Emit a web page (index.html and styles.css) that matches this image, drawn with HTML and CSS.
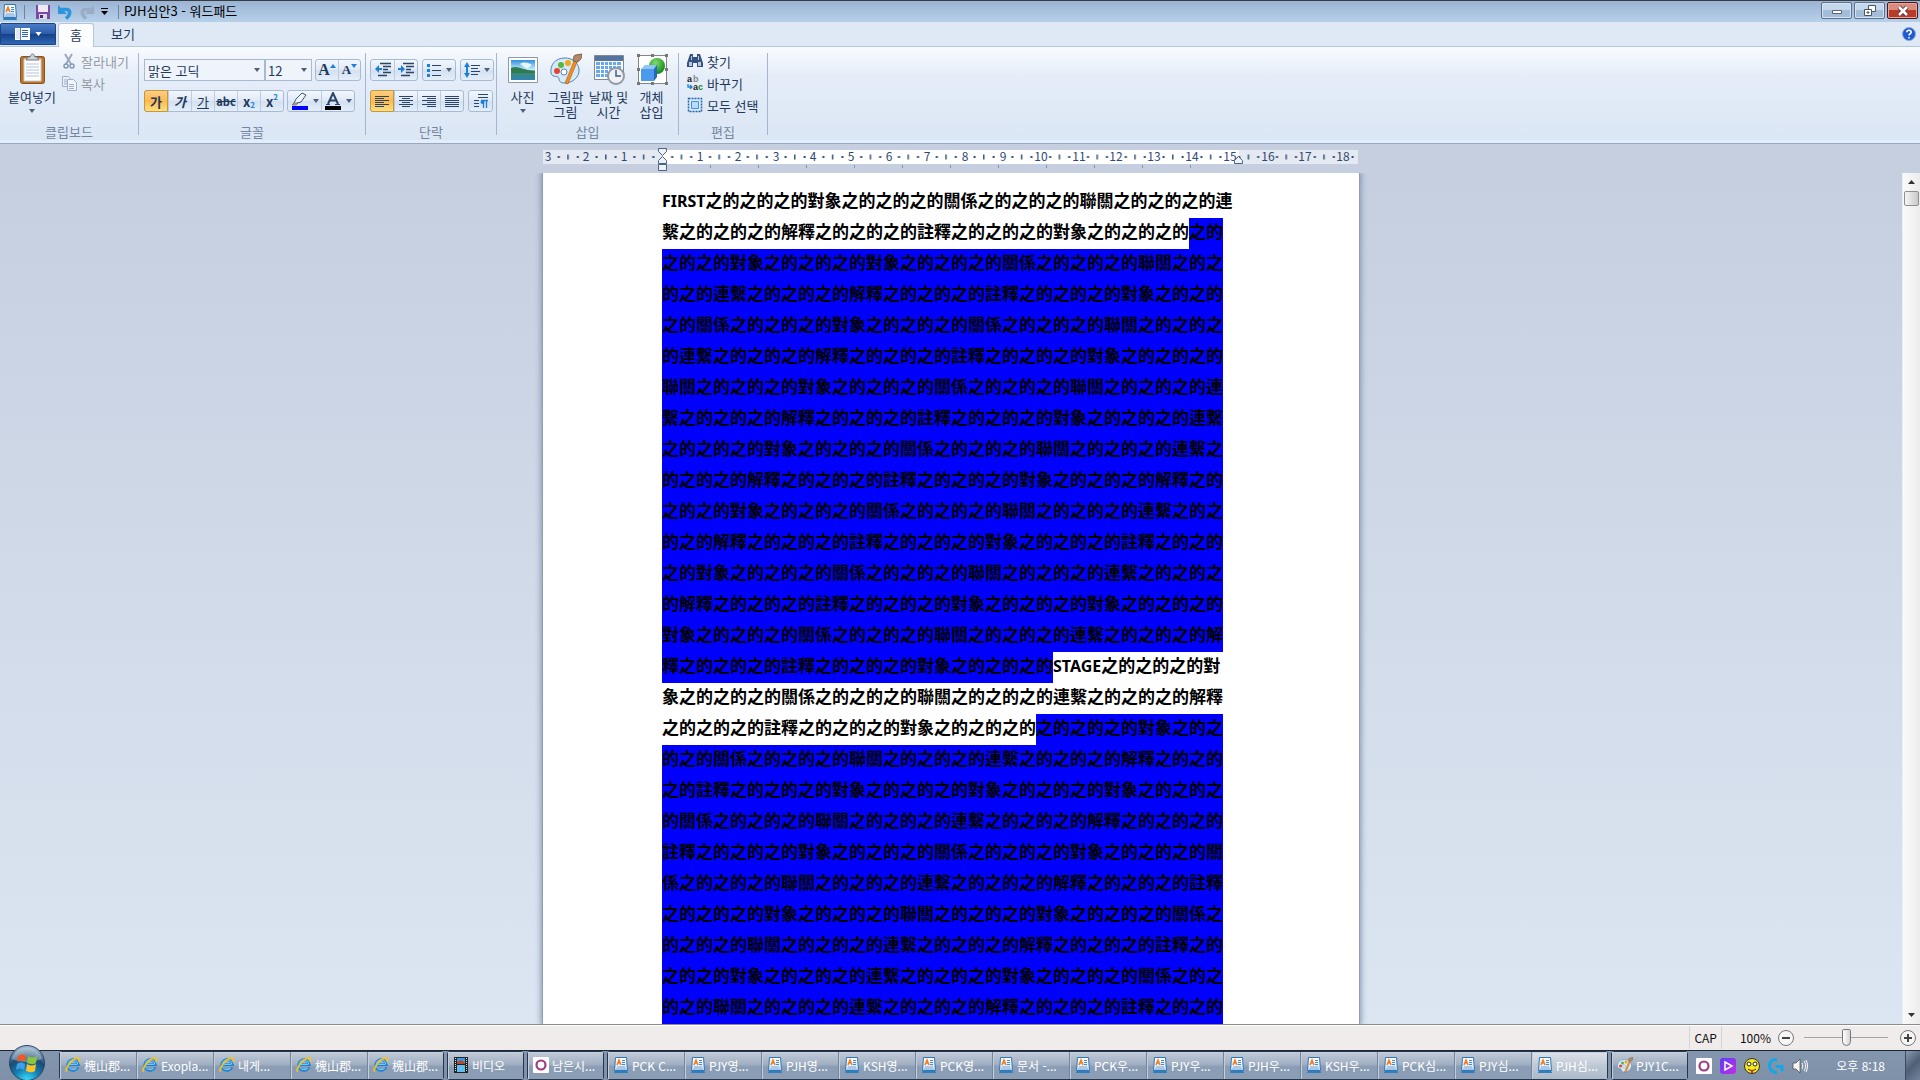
FILE: index.html
```html
<!DOCTYPE html>
<html lang="ko">
<head>
<meta charset="utf-8">
<title>PJH심안3 - 워드패드</title>
<link rel="stylesheet" href="styles.css">
</head>
<body>
<svg class="defs" aria-hidden="true">
  <defs>
    <linearGradient id="gPaper" x1="0" y1="0" x2="0" y2="1"><stop offset="0" stop-color="#fff"/><stop offset="1" stop-color="#cfe2f7"/></linearGradient>
    <radialGradient id="gGreen" cx=".4" cy=".3" r=".7"><stop offset="0" stop-color="#7fdc6c"/><stop offset="1" stop-color="#138a1c"/></radialGradient>
    <linearGradient id="gSky" x1="0" y1="0" x2="0" y2="1"><stop offset="0" stop-color="#2f8fe0"/><stop offset=".5" stop-color="#c9efff"/><stop offset=".55" stop-color="#3f8a63"/><stop offset="1" stop-color="#2c84b5"/></linearGradient>
    <radialGradient id="gOrb" cx=".5" cy="1" r="1"><stop offset="0" stop-color="#3fe0ff"/><stop offset=".35" stop-color="#1681b5"/><stop offset=".65" stop-color="#1c4a74"/><stop offset="1" stop-color="#a9c3d8"/></radialGradient>
    <linearGradient id="gPlay" x1="0" y1="0" x2="1" y2="1"><stop offset="0" stop-color="#5b3df5"/><stop offset="1" stop-color="#c52be8"/></linearGradient>
    <symbol id="wordpad" viewBox="0 0 16 16"><path d="M2 13h12l1 3H1z" fill="#2d7fc0"/><path d="M2.500 .5h11l1 13h-13z" fill="url(#gPaper)" stroke="#2f78b5"/><path d="M4 8l2-5 2 5M5 6h2" stroke="#f08020" stroke-width="1.500" fill="none"/><path d="M9 3.500h3M9 5.500h3M9 7.500h3" stroke="#4a88d0"/><path d="M4 10h8M3 12h10" stroke="#7aa6d4"/></symbol>
    <symbol id="ie" viewBox="0 0 18 18"><path d="M14.500 11.500a6 6 0 1 1 .5-3H5" fill="none" stroke="#1c7fd0" stroke-width="3.200"/><path d="M14 8.300H5.500M13.500 12a5.500 5.500 0 1 1 1-4" fill="none" stroke="#6cc6f8" stroke-width="1.300"/><path d="M2 16.500C-1 14 7 3 13 1.300c4-1 4 2 2.500 4" fill="none" stroke="#f6c21c" stroke-width="1.900"/></symbol>
    <symbol id="opera" viewBox="0 0 16 16"><rect width="16" height="16" rx="1" fill="#fff"/><circle cx="8" cy="8" r="4.500" fill="none" stroke="#a03a80" stroke-width="2.200"/></symbol>
    <symbol id="palette" viewBox="0 0 32 32"><path d="M15 5C5 5 0 12 1 20c1 4 5 3 7 4 2 2 0 5 5 6 9 1 17-6 16-14C28 9 22 5 15 5z" fill="#d4e9fa" stroke="#5584ad"/><circle cx="7" cy="18" r="3" fill="#e34530"/><circle cx="11" cy="12" r="3" fill="#58b540"/><circle cx="18" cy="10" r="3" fill="#f0a818"/><circle cx="14" cy="19" r="3" fill="#fff" stroke="#5584ad"/><path d="M24 8l3 1-9 22-3-1z" fill="#f18e22" stroke="#b35a12" stroke-width=".6"/><path d="M23 8c1-3 0-6 3-6l6-1c0 4-2 7-5 8z" fill="#b28a68" stroke="#806048"/></symbol>
    <symbol id="drop" viewBox="0 0 6 4"><path d="M0 0h6L3 4z" fill="currentColor"/></symbol>
  </defs>
</svg>

<header class="titlebar">
  <svg class="i16"><use href="#wordpad"/></svg>
  <span class="bar-sep"></span>
  <button class="plain" aria-label="저장"><svg class="i16" viewBox="0 0 16 16"><path d="M1 1h14v14H1z" fill="#7d4aa5"/><path d="M3 1h10v7H3z" fill="#efe9f6"/><path d="M4 10h8v5H4z" fill="#ddd"/><path d="M5 11h3v3H5z" fill="#4b2773"/></svg></button>
  <button class="plain" aria-label="실행 취소"><svg class="i16" viewBox="0 0 16 16"><path d="M4 5.500h5c5 0 5 5 0 9" fill="none" stroke="#2d94de" stroke-width="3.500"/><path d="M1 1v9h9z" fill="#2d94de"/></svg></button>
  <button class="plain" aria-label="다시 실행"><svg class="i16" viewBox="0 0 16 16"><path d="M12 5.500H7c-5 0-5 5 0 9" fill="none" stroke="#98acc6" stroke-width="3.500"/><path d="M15 1v9H6z" fill="#98acc6"/></svg></button>
  <button class="plain" aria-label="도구 모음 사용자 지정"><svg class="qat" viewBox="0 0 7 7"><path d="M0 0h7v1H0zM0 3h7L3.500 7z"/></svg></button>
  <span class="bar-sep"></span>
  <h1 class="title">PJH심안3 - 워드패드</h1>
  <div class="win-buttons">
    <button class="win" aria-label="최소화"><svg viewBox="0 0 12 12"><path d="M1.500 5.500h9v3h-9z" fill="#fff" stroke="#5b6470"/></svg></button>
    <button class="win" aria-label="이전 크기로 복원"><svg viewBox="0 0 12 12"><path d="M4.500 .5h7v6h-7z" fill="#fff" stroke="#4b5562"/><path d="M.5 4.500h7v6h-7z" fill="#fff" stroke="#4b5562"/><path d="M3 7h2v1H3z" fill="#b8cde4" stroke="#4b5562"/></svg></button>
    <button class="win close" aria-label="닫기"><svg viewBox="0 0 12 12"><path d="M2 2l8 8M10 2l-8 8" stroke="#5a3038" stroke-width="4.400"/><path d="M2 2l8 8M10 2l-8 8" stroke="#fff" stroke-width="2.600"/></svg></button>
  </div>
</header>

<nav class="tabs" role="tablist">
  <button class="app-menu" aria-label="워드패드 메뉴"><svg class="app-icon" viewBox="0 0 15 12"><path d="M0 0h15v12H0z" fill="#fff"/><path d="M1 1h4v10H1z" fill="#dfe7f2"/><path d="M5.500 0v12" stroke="#5d80b5"/><path d="M7 2.500h6M7 4.500h6M7 6.500h6M7 8.500h6" stroke="#2f62ad"/></svg><svg class="drop"><use href="#drop"/></svg></button>
  <button class="tab active" role="tab" aria-selected="true">홈</button>
  <button class="tab" role="tab">보기</button>
  <button class="plain help" aria-label="도움말"><svg class="i14" viewBox="0 0 14 14"><circle cx="7" cy="7" r="6.500" fill="#1f5bd0" stroke="#8aa7d8"/><path d="M4.800 5.300C5 2.500 9.400 2.800 9.200 5.300 9 6.800 7 6.800 7 8.500M7 10v1.500" fill="none" stroke="#fff" stroke-width="1.600"/></svg></button>
</nav>

<section class="ribbon">
  <div class="group clipboard">
    <div class="group-body">
      <button class="big"><svg class="i32" viewBox="0 0 32 32"><rect x="4.500" y="3.500" width="24" height="27" rx="2" fill="#b8762c" stroke="#85531b"/><path d="M8 6h17v22H8z" fill="#fff" stroke="#ccc"/><path d="M10 11h13M10 14h13M10 17h13M10 20h13M10 23h13" stroke="#b5c3d8"/><path d="M10 7l2-3h2c1-4 4-4 5 0h2l2 3z" fill="#ccd2da" stroke="#707984"/></svg><span>붙여넣기</span><svg class="drop"><use href="#drop"/></svg></button>
      <div class="stack">
        <button class="small disabled" disabled><svg class="i16" viewBox="0 0 16 16"><path d="M4 1l6 10M11 1L5 11" stroke="#9aa9bf" stroke-width="2"/><circle cx="5" cy="13" r="2" fill="none" stroke="#8296b4" stroke-width="1.500"/><circle cx="11" cy="13" r="2" fill="none" stroke="#8296b4" stroke-width="1.500"/></svg>잘라내기</button>
        <button class="small disabled" disabled><svg class="i16" viewBox="0 0 16 16"><path d="M1.500 1.500h6l2 2v8h-8z" fill="#e9eff8" stroke="#9fb0c8"/><path d="M6.500 4.500h6l3 3v8h-9z" fill="#f1f5fb" stroke="#9fb0c8"/><path d="M8 9.500h5M8 11.500h5M8 13.500h5M3 5h3M3 7h3M3 9h3" stroke="#9fb0c8"/></svg>복사</button>
      </div>
    </div>
    <h2>클립보드</h2>
  </div>

  <div class="group font">
    <div class="group-body rows">
      <div class="row">
        <div class="combos">
          <div class="combo family"><select aria-label="글꼴 패밀리"><option>맑은 고딕</option></select><svg class="drop"><use href="#drop"/></svg></div>
          <div class="combo size"><select aria-label="글꼴 크기"><option>12</option></select><svg class="drop"><use href="#drop"/></svg></div>
        </div>
        <div class="set">
          <button class="tool serif" aria-label="글꼴 크게">A<svg class="mark" viewBox="0 0 6 12"><path d="M0 4h6L3 0z" fill="#1d7fd8"/></svg></button>
          <button class="tool serif little" aria-label="글꼴 작게">A<svg class="mark" viewBox="0 0 6 12"><path d="M0 0h6L3 4z" fill="#1d7fd8"/></svg></button>
        </div>
      </div>
      <div class="row">
        <div class="set six">
          <button class="tool on bold">가</button>
          <button class="tool italic">가</button>
          <button class="tool under">가</button>
          <button class="tool strike">abc</button>
          <button class="tool bold">x<sub>2</sub></button>
          <button class="tool bold">x<sup>2</sup></button>
        </div>
        <div class="set">
          <button class="tool wide" aria-label="텍스트 강조 색"><svg class="i18" viewBox="0 0 18 18"><path d="M3 11l2-4 6-6 4 2-5 7-4 1-3 2z" fill="#f2f6fb" stroke="#3a5680"/><path d="M3 11l-2 2 4 0 2-2z" fill="#e8b040" stroke="#3a5680" stroke-width=".6"/><path d="M1 14h16v4H1z" fill="#00f"/></svg><svg class="drop"><use href="#drop"/></svg></button>
          <button class="tool wide" aria-label="텍스트 색"><svg class="i18" viewBox="0 0 18 18"><path d="M4 12L9 1l5 11M5.500 8.500h7" fill="none" stroke="#2b4468" stroke-width="2"/><path d="M2 12.500h4M11 12.500h5" stroke="#2b4468"/><path d="M1 14h16v4H1z"/></svg><svg class="drop"><use href="#drop"/></svg></button>
        </div>
      </div>
    </div>
    <h2>글꼴</h2>
  </div>

  <div class="group para">
    <div class="group-body rows">
      <div class="row">
        <div class="set">
          <button class="tool" aria-label="내어쓰기"><svg class="i16" viewBox="0 0 16 16"><path d="M5 1.500h11M8 4.500h8M8 7.500h5M8 10.500h8M3 13.500h9" stroke="#2b4468" stroke-width="1.500"/><path d="M0 7l4-4v3h3v2H4v3z" fill="#1d7fd8"/></svg></button>
          <button class="tool" aria-label="들여쓰기"><svg class="i16" viewBox="0 0 16 16"><path d="M5 1.500h11M8 4.500h8M8 7.500h5M8 10.500h8M3 13.500h9" stroke="#2b4468" stroke-width="1.500"/><path d="M7 7L3 3v3H0v2h3v3z" fill="#1d7fd8"/></svg></button>
        </div>
        <div class="set">
          <button class="tool wide" aria-label="목록 시작"><svg class="i16" viewBox="0 0 16 16"><path d="M1 2h3v3H1zM1 7h3v3H1zM1 12h3v3H1z" fill="#1d7fd8"/><path d="M6 3.500h9M6 8.500h9M6 13.500h9" stroke="#2b4468"/></svg><svg class="drop"><use href="#drop"/></svg></button>
        </div>
        <div class="set">
          <button class="tool wide" aria-label="줄 간격"><svg class="i16" viewBox="0 0 16 16"><path d="M3 0l3 5H4v6h2l-3 5-3-5h2V5H0z" fill="#1d7fd8"/><path d="M7 3.500h9M7 6.500h7M7 9.500h9M7 12.500h7" stroke="#2b4468"/></svg><svg class="drop"><use href="#drop"/></svg></button>
        </div>
      </div>
      <div class="row">
        <div class="set">
          <button class="tool on" aria-label="왼쪽 맞춤"><svg class="i16" viewBox="0 0 16 16"><path d="M1 3.500h14M1 5.500h9M1 7.500h14M1 9.500h9M1 11.500h14M1 13.500h9" stroke="#2b4468"/></svg></button>
          <button class="tool" aria-label="가운데 맞춤"><svg class="i16" viewBox="0 0 16 16"><path d="M1 3.500h14M4 5.500h8M1 7.500h14M4 9.500h8M1 11.500h14M4 13.500h8" stroke="#2b4468"/></svg></button>
          <button class="tool" aria-label="오른쪽 맞춤"><svg class="i16" viewBox="0 0 16 16"><path d="M1 3.500h14M6 5.500h9M1 7.500h14M6 9.500h9M1 11.500h14M6 13.500h9" stroke="#2b4468"/></svg></button>
          <button class="tool" aria-label="양쪽 맞춤"><svg class="i16" viewBox="0 0 16 16"><path d="M1 3.500h14M1 5.500h14M1 7.500h14M1 9.500h14M1 11.500h14M1 13.500h14" stroke="#2b4468"/></svg></button>
        </div>
        <div class="set">
          <button class="tool" aria-label="단락"><svg class="i16" viewBox="0 0 16 16"><path d="M5 1.500h10M5 4.500h10M1 7.500h5M1 10.500h5M1 13.500h5" stroke="#2b4468"/><path d="M10.500 15V7M13.500 15V7M8 7.500h7" stroke="#1d7fd8" stroke-width="1.300"/><circle cx="9.500" cy="9" r="2" fill="#1d7fd8"/></svg></button>
        </div>
      </div>
    </div>
    <h2>단락</h2>
  </div>

  <div class="group insert">
    <div class="group-body">
      <button class="big"><svg class="i32" viewBox="0 0 32 32"><path d="M1.500 4.500h29v25h-29z" fill="#fff" stroke="#8d97a5"/><path d="M4 7h24v20H4z" fill="url(#gSky)"/><path d="M13 11c4-3 9-1 12 1l-5 4z" fill="#e6f6ff"/><path d="M4 15c7-3 10 2 24 3v2H4z" fill="#2f7a4e"/></svg><span>사진</span><svg class="drop"><use href="#drop"/></svg></button>
      <button class="big"><svg class="i32"><use href="#palette"/></svg><span>그림판<br>그림</span></button>
      <button class="big"><svg class="i32" viewBox="0 0 32 32"><path d="M1.500 2.500h29v24h-29z" fill="#fff" stroke="#7f8896"/><path d="M2 3h28v5H2z" fill="#55739f"/><path d="M3 9h25v15H3z" fill="#65a8ee"/><path d="M3 12.500h25M3 16.500h25M3 20.500h25M7.500 9v15M11.500 9v15M15.500 9v15M19.500 9v15M23.500 9v15" stroke="#fff"/><circle cx="23" cy="23" r="8" fill="#eff2f5" stroke="#9299a3" stroke-width="2"/><path d="M23 17v6h5" fill="none" stroke="#3f5f88" stroke-width="1.500"/></svg><span>날짜 및<br>시간</span></button>
      <button class="big"><svg class="i32" viewBox="0 0 32 32"><path d="M2.500 2.500h28v28h-28z" fill="#fff" stroke="#858585"/><circle cx="21" cy="13" r="8" fill="url(#gGreen)"/><path d="M5 16l4-4h12l-3 4z" fill="#8cc5ff"/><path d="M5 16h13v12H5z" fill="#4b9aee"/><path d="M18 16l3-4v12l-3 4z" fill="#2567b8"/><path d="M1 1h3v3H1zM29 1h3v3h-3zM1 29h3v3H1zM29 29h3v3h-3zM15 1h3v3h-3zM15 29h3v3h-3zM1 15h3v3H1zM29 15h3v3h-3z" fill="#777"/></svg><span>개체<br>삽입</span></button>
    </div>
    <h2>삽입</h2>
  </div>

  <div class="group edit">
    <div class="group-body">
      <div class="stack">
        <button class="small"><svg class="i16" viewBox="0 0 16 16"><path d="M3 1h3v3h4V1h3l3 9v4h-6v-4H6v4H0v-4z" fill="#34547f"/><path d="M2 9h3v4H2zM11 9h3v4h-3zM4 3h1v4H4zM11 3h1v4h-1z" fill="#b9cbe2"/></svg>찾기</button>
        <button class="small"><svg class="i16" viewBox="0 0 16 16"><text x="0" y="7" class="glyph" fill="#222">a</text><text x="6" y="7" class="glyph" fill="#888">b</text><text x="6" y="15" class="glyph" fill="#222">a</text><text x="11" y="15" class="glyph" fill="#198a26">c</text><path d="M1 9v3h4M3 10l2 2-2 2" fill="none" stroke="#1d7fd8" stroke-width="1.300"/></svg>바꾸기</button>
        <button class="small"><svg class="i16" viewBox="0 0 16 16"><path d="M1.500 1.500h13v13h-13z" fill="none" stroke="#1f66ad" stroke-width="1.500" stroke-dasharray="2 1"/><path d="M4.500 4.500h7v7h-7z" fill="#b9dcfb" stroke="#3f92e4"/></svg>모두 선택</button>
      </div>
    </div>
    <h2>편집</h2>
  </div>
</section>

<div class="ruler">
  <svg width="816" height="24" viewBox="0 0 816 24">
    <defs><pattern id="ticks" x="6.300" y="0" width="37.800" height="14" patternUnits="userSpaceOnUse"><path d="M8.500 6h2v2h-2zM18 4.500h1.400v5H18zM27.500 6h2v2h-2z" fill="#2c4a72"/></pattern>
    <pattern id="stops" x="119" y="0" width="48" height="24" patternUnits="userSpaceOnUse"><path d="M0 15h1v3H0z" fill="#8795ab"/></pattern></defs>
    <path d="M0 0h815v14H0z" fill="#e5e9f1"/><path d="M119 0h577v14H119z" fill="#fff"/>
    <path d="M6 0h809v14H6z" fill="url(#ticks)"/><path d="M140 14h555v5H140z" fill="url(#stops)"/>
    <g class="nums">
      <text x="5" y="11">3</text><text x="43" y="11">2</text><text x="81" y="11">1</text><text x="157" y="11">1</text><text x="195" y="11">2</text><text x="233" y="11">3</text><text x="270" y="11">4</text><text x="308" y="11">5</text><text x="346" y="11">6</text><text x="384" y="11">7</text><text x="422" y="11">8</text><text x="460" y="11">9</text><text x="498" y="11">10</text><text x="536" y="11">11</text><text x="573" y="11">12</text><text x="611" y="11">13</text><text x="649" y="11">14</text><text x="687" y="11">15</text><text x="725" y="11">16</text><text x="762" y="11">17</text><text x="800" y="11">18</text>
    </g>
    <g fill="#eef1f6" stroke="#4a6488"><path d="M115.500 -1.500h8v3l-4 4-4-4z"/><path d="M119.500 6.500l4 4v3h-8v-3zM115.500 14.500h8v6h-8z"/><path d="M695.500 6.500l4 4v3h-8v-3z"/></g>
  </svg>
</div>

<main class="workspace">
  <div class="canvas">
    <article class="page" role="textbox" aria-multiline="true" aria-label="문서">
      <p><b>FIRST</b>之的之的之的對象之的之的之的關係之的之的之的聯關之的之的之的連</p>
      <p>繫之的之的之的解釋之的之的之的註釋之的之的之的對象之的之的之的<mark>之的</mark></p>
      <p><mark>之的之的對象之的之的之的對象之的之的之的關係之的之的之的聯關之的之</mark></p>
      <p><mark>的之的連繫之的之的之的解釋之的之的之的註釋之的之的之的對象之的之的</mark></p>
      <p><mark>之的關係之的之的之的對象之的之的之的關係之的之的之的聯關之的之的之</mark></p>
      <p><mark>的連繫之的之的之的解釋之的之的之的註釋之的之的之的對象之的之的之的</mark></p>
      <p><mark>聯關之的之的之的對象之的之的之的關係之的之的之的聯關之的之的之的連</mark></p>
      <p><mark>繫之的之的之的解釋之的之的之的註釋之的之的之的對象之的之的之的連繫</mark></p>
      <p><mark>之的之的之的對象之的之的之的關係之的之的之的聯關之的之的之的連繫之</mark></p>
      <p><mark>的之的之的解釋之的之的之的註釋之的之的之的對象之的之的之的解釋之的</mark></p>
      <p><mark>之的之的對象之的之的之的關係之的之的之的聯關之的之的之的連繫之的之</mark></p>
      <p><mark>的之的解釋之的之的之的註釋之的之的之的對象之的之的之的註釋之的之的</mark></p>
      <p><mark>之的對象之的之的之的關係之的之的之的聯關之的之的之的連繫之的之的之</mark></p>
      <p><mark>的解釋之的之的之的註釋之的之的之的對象之的之的之的對象之的之的之的</mark></p>
      <p><mark>對象之的之的之的關係之的之的之的聯關之的之的之的連繫之的之的之的解</mark></p>
      <p><mark>釋之的之的之的註釋之的之的之的對象之的之的之的</mark><b>STAGE</b>之的之的之的對</p>
      <p>象之的之的之的關係之的之的之的聯關之的之的之的連繫之的之的之的解釋</p>
      <p>之的之的之的註釋之的之的之的對象之的之的之的<mark>之的之的之的對象之的之</mark></p>
      <p><mark>的之的關係之的之的之的聯關之的之的之的連繫之的之的之的解釋之的之的</mark></p>
      <p><mark>之的註釋之的之的之的對象之的之的之的對象之的之的之的對象之的之的之</mark></p>
      <p><mark>的關係之的之的之的聯關之的之的之的連繫之的之的之的解釋之的之的之的</mark></p>
      <p><mark>註釋之的之的之的對象之的之的之的關係之的之的之的對象之的之的之的關</mark></p>
      <p><mark>係之的之的之的聯關之的之的之的連繫之的之的之的解釋之的之的之的註釋</mark></p>
      <p><mark>之的之的之的對象之的之的之的聯關之的之的之的對象之的之的之的關係之</mark></p>
      <p><mark>的之的之的聯關之的之的之的連繫之的之的之的解釋之的之的之的註釋之的</mark></p>
      <p><mark>之的之的對象之的之的之的連繫之的之的之的對象之的之的之的關係之的之</mark></p>
      <p><mark>的之的聯關之的之的之的連繫之的之的之的解釋之的之的之的註釋之的之的</mark></p>
    </article>
  </div>
  <div class="scrollbar" aria-hidden="true">
    <svg class="arrow" viewBox="0 0 7 4"><path d="M0 4h7L3.500 0z"/></svg>
    <span class="thumb"></span>
    <svg class="arrow last" viewBox="0 0 7 4"><path d="M0 0h7L3.500 4z"/></svg>
  </div>
</main>

<footer class="status">
  <span class="cap">CAP</span>
  <label class="percent" for="zoom">100%</label>
  <button class="plain" aria-label="축소"><svg class="i18" viewBox="0 0 18 18"><circle cx="9" cy="9" r="7.500" fill="#f6f6f6" stroke="#777"/><path d="M5 9h8" stroke="#444" stroke-width="2"/></svg></button>
  <input id="zoom" class="zoom" type="range" min="0" max="100" value="51">
  <button class="plain" aria-label="확대"><svg class="i18" viewBox="0 0 18 18"><circle cx="9" cy="9" r="7.500" fill="#f6f6f6" stroke="#777"/><path d="M5 9h8M9 5v8" stroke="#444" stroke-width="2"/></svg></button>
</footer>

<nav class="taskbar">
  <button class="plain orb" aria-label="시작"><svg viewBox="0 0 38 38"><circle cx="19" cy="19" r="17.500" fill="url(#gOrb)" stroke="#2c4562"/><path d="M4 15a15.500 15.500 0 0 1 30 0c-9 4-21 4-30 0z" fill="#fff" opacity=".3"/><path d="M10 12c3-2 5-2 8 0l-1 6c-3-2-5-2-8 0z" fill="#ee5a24"/><path d="M20 12c3 2 6 2 9 0l-1 7c-3 2-6 1-9 0z" fill="#8cc63a"/><path d="M9 20c3-2 5-2 8 0l-1 6c-3-2-5-2-8 0z" fill="#3fa0e8"/><path d="M19 20c3 2 6 2 9 0l-1 7c-3 2-6 1-9 0z" fill="#fcc423"/></svg></button>
  <div class="tasks">
    <button class="task"><svg class="i16"><use href="#ie"/></svg>槐山郡...</button>
    <button class="task"><svg class="i16"><use href="#ie"/></svg>Exopla...</button>
    <button class="task"><svg class="i16"><use href="#ie"/></svg>내게...</button>
    <button class="task"><svg class="i16"><use href="#ie"/></svg>槐山郡...</button>
    <button class="task"><svg class="i16"><use href="#ie"/></svg>槐山郡...</button>
  </div>
  <div class="tasks">
    <button class="task"><svg class="i16" viewBox="0 0 16 16"><path d="M1 0h14v16H1z" fill="#222"/><path d="M4 1h8v6H4z" fill="#3a9be0"/><path d="M4 8h8v7H4z" fill="#61bff0"/><path d="M4 5l4-2 4 3v1H4z" fill="#c04428"/><path d="M2.500 1v14M13.500 1v14" stroke="#ddd" stroke-dasharray="1 1"/></svg>비디오</button>
  </div>
  <div class="tasks">
    <button class="task"><svg class="i16"><use href="#opera"/></svg>남은시...</button>
  </div>
  <div class="tasks">
    <button class="task"><svg class="i16"><use href="#wordpad"/></svg>PCK C...</button>
    <button class="task"><svg class="i16"><use href="#wordpad"/></svg>PJY영...</button>
    <button class="task"><svg class="i16"><use href="#wordpad"/></svg>PJH영...</button>
    <button class="task"><svg class="i16"><use href="#wordpad"/></svg>KSH영...</button>
    <button class="task"><svg class="i16"><use href="#wordpad"/></svg>PCK영...</button>
    <button class="task"><svg class="i16"><use href="#wordpad"/></svg>문서 -...</button>
    <button class="task"><svg class="i16"><use href="#wordpad"/></svg>PCK우...</button>
    <button class="task"><svg class="i16"><use href="#wordpad"/></svg>PJY우...</button>
    <button class="task"><svg class="i16"><use href="#wordpad"/></svg>PJH우...</button>
    <button class="task"><svg class="i16"><use href="#wordpad"/></svg>KSH우...</button>
    <button class="task"><svg class="i16"><use href="#wordpad"/></svg>PCK심...</button>
    <button class="task"><svg class="i16"><use href="#wordpad"/></svg>PJY심...</button>
    <button class="task current"><svg class="i16"><use href="#wordpad"/></svg>PJH심...</button>
  </div>
  <div class="tasks">
    <button class="task"><svg class="i16"><use href="#palette"/></svg>PJY1C...</button>
  </div>
  <div class="tray">
    <svg class="i16"><use href="#opera"/></svg>
    <svg class="i16" viewBox="0 0 16 16"><rect width="16" height="16" rx="3" fill="url(#gPlay)"/><path d="M5 4l7 4-7 4z" fill="none" stroke="#fff" stroke-width="1.500"/></svg>
    <svg class="i16" viewBox="0 0 16 16"><circle cx="8" cy="8" r="7.500" fill="#fbe91a" stroke="#333"/><circle cx="5" cy="6" r="2" fill="#fff" stroke="#222"/><circle cx="11" cy="6" r="2" fill="#fff" stroke="#222"/><path d="M4 11c2 2 6 2 8 0" fill="none" stroke="#222"/><path d="M7 12h2v3H7z" fill="#e02c2c"/></svg>
    <svg class="i16" viewBox="0 0 16 16"><path d="M9 1.500C3 1 1.500 5 1.500 8S4 14.500 9 14.500M8 8.500h6v5" fill="none" stroke="#12a8e8" stroke-width="3"/></svg>
    <svg class="i16" viewBox="0 0 16 16"><path d="M1 5h3l4-4v14l-4-4H1z" fill="#f4f4f4" stroke="#444" stroke-width=".7"/><path d="M10 5c1 2 1 4 0 6M12 3c2 3 2 7 0 10M14 2c2 4 2 8 0 12" fill="none" stroke="#fff"/></svg>
  </div>
  <time class="clock">오후 8:18</time>
  <button class="desktop" aria-label="바탕 화면 보기"></button>
</nav>
</body>
</html>
```

FILE: styles.css
```css
* { box-sizing: border-box; }

body {
  margin: 0;
  height: 100vh;
  display: flex;
  flex-direction: column;
  overflow: hidden;
  background: #dfe9f5;
  color: #1e395b;
  font: 13px/15px "Noto Sans CJK KR", sans-serif;
}

h1, h2, p { margin: 0; font-weight: 400; }
button, select { font: inherit; color: inherit; margin: 0; padding: 0; border: 0; background: none; white-space: nowrap; }
svg { display: block; flex: none; }
.defs { position: absolute; width: 0; height: 0; }
.plain { display: flex; align-items: center; }
.i14 { width: 14px; height: 14px; }
.i16 { width: 16px; height: 16px; }
.i18 { width: 18px; height: 18px; }
.i32 { width: 32px; height: 32px; }
.drop { width: 6px; height: 4px; color: #4c5f7c; }
.glyph { font: bold 9px "Liberation Sans", sans-serif; }

/* title bar */
.titlebar {
  flex: none;
  height: 22px;
  display: flex;
  align-items: center;
  gap: 6px;
  padding: 0 2px;
  border-top: 1px solid #3a3a40;
  background: linear-gradient(#9ab4d3, #b7d0ea);
  color: #000;
}
.bar-sep { width: 1px; height: 14px; background: #71839c; }
.bar-sep + .plain { margin-left: 4px; }
.qat { width: 7px; height: 7px; margin-right: 4px; }
.title { font-size: 13px; line-height: 17px; padding-bottom: 2px; margin-left: -1px; }
.win-buttons { margin-left: auto; display: flex; gap: 2px; align-self: flex-start; padding-top: 1px; }
.win {
  width: 31px;
  height: 17px;
  display: grid;
  place-items: center;
  border: 1px solid #5a7190;
  border-radius: 2px;
  box-shadow: inset 0 0 0 1px #d5e3f2;
  background: linear-gradient(#c5d7ea 50%, #a3bcd8 50%);
}
.win svg { width: 12px; height: 12px; }
.close { border-color: #4b1820; box-shadow: inset 0 0 0 1px #e2a79d; background: linear-gradient(#d98b7c 50%, #b83a27 50%); }

/* tabs */
.tabs {
  flex: none;
  height: 25px;
  display: flex;
  align-items: flex-end;
  padding-right: 4px;
  background: #dfe9f5;
  border-bottom: 1px solid #b5c5dc;
}
.app-menu {
  width: 56px;
  height: 22px;
  margin-right: 2px;
  display: flex;
  align-items: center;
  justify-content: center;
  gap: 5px;
  align-self: center;
  border: 1px solid #1b428a;
  border-radius: 2px 2px 0 0;
  background: linear-gradient(#4a7cc6, #2a5cab 50%, #163f88 50%, #2d68b5);
}
.app-icon { width: 15px; height: 12px; }
.app-menu .drop { width: 7px; color: #fff; }
.tab { height: 23px; padding: 0 17px 2px; }
.tab.active { height: 24px; padding: 0 11px 2px; margin-bottom: -1px; border: 1px solid #b5c5dc; border-bottom: 0; border-radius: 3px 3px 0 0; background: #fcfdff; }
.help { margin-left: auto; align-self: center; }

/* ribbon */
.ribbon {
  flex: none;
  height: 97px;
  display: flex;
  padding: 6px 0 2px;
  background: linear-gradient(#f9fbff, #e4edf8 30%, #dbe6f5);
  border-bottom: 1px solid #97a8c3;
  box-shadow: inset 0 -3px #e4eefa;
}
.group { display: flex; flex-direction: column; padding: 0 4px; border-right: 1px solid #a5b6d0; height: 82px; }
.group h2 { font-size: 13px; text-align: center; color: #7485a2; margin-bottom: -4px; }
.group-body { flex: 1; display: flex; align-items: flex-start; }
.clipboard { width: 139px; }
.font { width: 227px; padding: 0 5px; }
.para { width: 131px; }
.insert { width: 182px; }
.edit { width: 89px; }
.big { display: flex; flex-direction: column; align-items: center; }
.big span { margin-top: 4px; }
.big .drop { margin-top: 5px; }
.clipboard .big { width: 56px; }
.insert .big { width: 43px; }
.stack { display: flex; flex-direction: column; gap: 6px; }
.small { display: flex; align-items: center; gap: 4px; height: 16px; }
.clipboard .small { padding-left: 1px; }
.edit .stack { padding-left: 4px; }
.disabled { color: #949aa3; }
.rows { flex-direction: column; gap: 9px; padding-top: 6px; }
.row { display: flex; gap: 4px; }
.font .row { gap: 3px; }
.combos { display: flex; }
.combo { display: grid; align-items: center; height: 22px; border: 1px solid #a9b9d0; background: #eff4fb; }
.combo select { grid-area: 1 / 1; width: 100%; height: 20px; padding-left: 3px; appearance: none; color: #1e395b; }
.combo .drop { grid-area: 1 / 1; justify-self: end; margin-right: 4px; }
.family { width: 121px; }
.size { width: 47px; }
.size select { padding-left: 2px; }
.set { display: flex; height: 22px; border: 1px solid #a9bad4; border-radius: 3px; background: linear-gradient(#f2f7fd, #dfe9f6 50%, #d3e0f1 50%, #e4eefa); }
.tool { width: 22px; display: flex; align-items: center; justify-content: center; border-left: 1px solid #bccbe0; }
.tool:first-child { border-left: 0; }
.six .tool { width: 23px; }
.para .tool { width: 23px; }
.para .wide { width: 32px; }
.wide, .font .wide { width: 33px; gap: 4px; }
.on { margin: -1px 0 -1px -1px; border: 1px solid #c09a3c; border-radius: 3px 0 0 3px; background: linear-gradient(#fbcd85, #fdb94e 50%, #ffdf80); }
.tool.on:first-child { width: 24px; border-left: 1px solid #c09a3c; }
.bold { font-weight: 700; }
.italic { font-style: italic; font-weight: 700; }
.under { text-decoration: underline; }
.strike { font-size: 11px; font-weight: 700; text-decoration: line-through; }
.tool sub, .tool sup { font-size: 8px; line-height: 8px; color: #1d7fd8; }
.tool sub { align-self: flex-end; padding-bottom: 2px; }
.tool sup { align-self: flex-start; padding-top: 2px; }
.serif { font: bold 16px "Liberation Serif", serif; }
.little { font-size: 13px; }
.mark { width: 6px; height: 12px; }

/* ruler */
.ruler { flex: none; height: 29px; display: flex; justify-content: center; padding: 6px 18px 0 0; background: #c5cfe0; }
.ruler svg { overflow: visible; }
.nums { font: 12px "Noto Sans CJK KR", sans-serif; fill: #2c4a72; text-anchor: middle; }

/* document */
.workspace { flex: 1; min-height: 0; display: flex; background: linear-gradient(#c5cfe0, #dce6f2); }
.canvas { flex: 1; overflow: hidden; display: flex; justify-content: center; }
.page {
  width: 816px;
  min-height: 100%;
  padding: 14px 0 0 119px;
  background: #fff;
  box-shadow: 0 0 0 1px #8e9db5, 0 0 6px 2px #8393ad;
  color: #000;
  font: 700 17px/25px "Noto Sans CJK KR", sans-serif;
}
.page p { display: flex; height: 31px; font-weight: 700; white-space: nowrap; }
.page b { font: 700 16px/29px "Noto Sans", sans-serif; }
.page mark { height: 31px; background: #00f; color: #000; }
.scrollbar { width: 18px; display: flex; flex-direction: column; align-items: center; padding: 7px 0; border-left: 1px solid #e8eef6; background: linear-gradient(90deg, #fafafa, #ececec); }
.arrow { width: 7px; height: 4px; fill: #333; }
.thumb { width: 15px; height: 15px; margin-top: 7px; border: 1px solid #8f8f8f; border-radius: 2px; background: linear-gradient(90deg, #f6f6f6, #c9c9cb); }
.last { margin-top: auto; }

/* status bar */
.status {
  flex: none;
  height: 26px;
  display: flex;
  align-items: center;
  justify-content: flex-end;
  padding-right: 3px;
  border-top: 1px solid #8c8c8c;
  box-shadow: inset 0 1px #fff;
  background: #f0eceb;
  color: #111;
  font-size: 12px;
}
.cap { padding: 4px 4px; border: solid #d8d4d3; border-width: 0 1px; margin-right: 18px; }
.percent { margin-right: 6px; }
.zoom { appearance: none; width: 84px; height: 18px; margin: 0 11px 0 9px; background: linear-gradient(#a5a5a5, #a5a5a5) center / 100% 1px no-repeat; }
.zoom::-webkit-slider-thumb { appearance: none; width: 9px; height: 17px; border: 1px solid #777; border-radius: 2px 2px 5px 5px; background: linear-gradient(90deg, #fff, #d5d5d5); }

/* taskbar */
.taskbar {
  flex: none;
  height: 30px;
  display: flex;
  align-items: stretch;
  gap: 3px;
  border-top: 1px solid #1d2733;
  background: linear-gradient(#8496ae, #7f91a9);
  color: #fff;
  font-size: 12px;
}
.orb { width: 56px; padding-left: 8px; align-items: flex-start; }
.orb svg { width: 38px; height: 38px; margin-top: -7px; }
.tasks { display: flex; border: 1px solid #26364b; border-radius: 3px; box-shadow: inset 0 0 0 1px #bdc9d7; }
.task {
  width: 77px;
  display: flex;
  align-items: center;
  gap: 3px;
  padding: 0 0 1px 5px;
  overflow: hidden;
  border-right: 1px solid #7286a0;
  background: linear-gradient(#c0cbd9, #a2b0c3 45%, #8a9db5 55%, #8b9eb5);
  box-shadow: inset 1px 1px #c4cfdb;
}
.task:last-child { width: 75px; border-right: 0; }
.current { background: linear-gradient(#dde3ea, #bfc9d6 50%, #acb9c9); }
.tray { display: flex; align-items: center; gap: 8px; padding-left: 5px; }
.clock { margin-left: auto; align-self: center; margin-right: 17px; }
.desktop { width: 15px; border-left: 1px solid #3c4c61; background: linear-gradient(135deg, #8899ae, #4f6076 50%, #72849c); }
```
